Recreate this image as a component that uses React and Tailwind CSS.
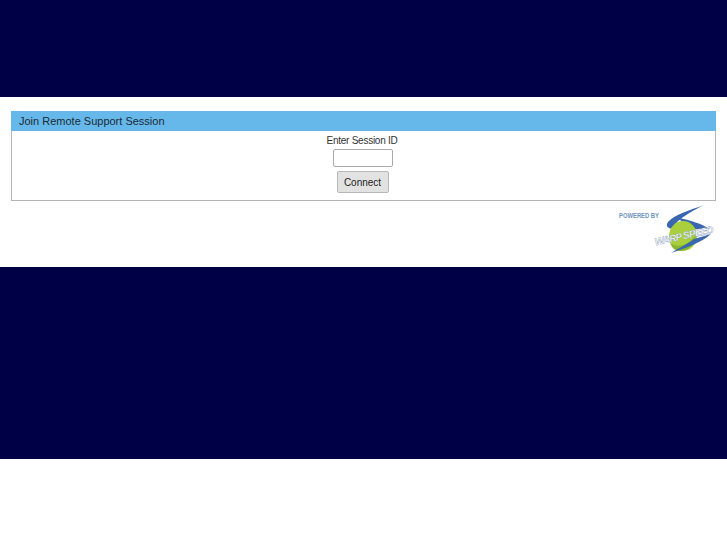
import React from "react";

function Logo() {
  return (
    <svg width="107" height="52" viewBox="0 0 107 52" className="block overflow-visible">
      <text x="9" y="14" fontFamily="Liberation Sans, sans-serif" fontSize="7.5" fontWeight="700" fill="#6f93bd" textLength="40" lengthAdjust="spacingAndGlyphs">POWERED BY</text>
      <path d="M94 1 C80 6 64 11 58 18 C55 22 58 25 64 25 C62 20 74 11 94 1 Z" fill="#3a66ae" />
      <path d="M68 14 C80 16 92 20 100 25 L80 25 Z" fill="#3a66ae" />
      <ellipse cx="73" cy="32" rx="14" ry="15" fill="#a9cf3c" />
      <path d="M60 39 C68 45 80 41 86 30 C86 40 79 47 70 47 C65 47 62 44 60 39 Z" fill="#86b72f" />
      <path d="M101 30 C92 38 76 44 61 49 C71 43 79 39 84 35 Z" fill="#3a66ae" />
      <text x="44" y="35" fontFamily="Liberation Sans, sans-serif" fontSize="10" fontStyle="italic" fontWeight="700" fill="#ffffff" stroke="#5f7aa8" strokeWidth="0.3" textLength="60" lengthAdjust="spacing" transform="rotate(-12.5 75 31)">WARP SPEED</text>
    </svg>
  );
}

export default function App() {
  return (
    <div className="min-h-[545px] bg-white font-['Liberation_Sans',Arial,sans-serif] text-[#222]">
      <div className="h-[97px] bg-[#000046]" />
      <div className="h-[170px] bg-white px-[11px] pt-[14px]">
        <div className="w-[705px] h-[90px] border border-[#b4b4b4] border-t-0">
          <div className="h-[20px] bg-[#66b8ea] flex items-center text-[11px] text-[#1c2a36] -mx-px px-[8px]">
            Join Remote Support Session
          </div>
          <div className="flex flex-col items-center pt-[3px]">
            <div className="h-[13px] leading-[13px] text-[10px] tracking-[-0.25px] text-[#333] -ml-[3px]">Enter Session ID</div>
            <input className="mt-[2px] -ml-[2px] w-[60px] h-[18px] bg-white border border-[#aaa] rounded-[2px] outline-none" />
            <button className="mt-[4px] -ml-[2px] w-[52px] h-[22px] bg-[#e2e2e2] border border-[#b8b8b8] rounded-[2px] text-[10px] text-[#222]">Connect</button>
          </div>
        </div>
        <div className="flex justify-end mt-[3px] w-[706px]">
          <Logo />
        </div>
      </div>
      <div className="h-[192px] bg-[#000046]" />
    </div>
  );
}
